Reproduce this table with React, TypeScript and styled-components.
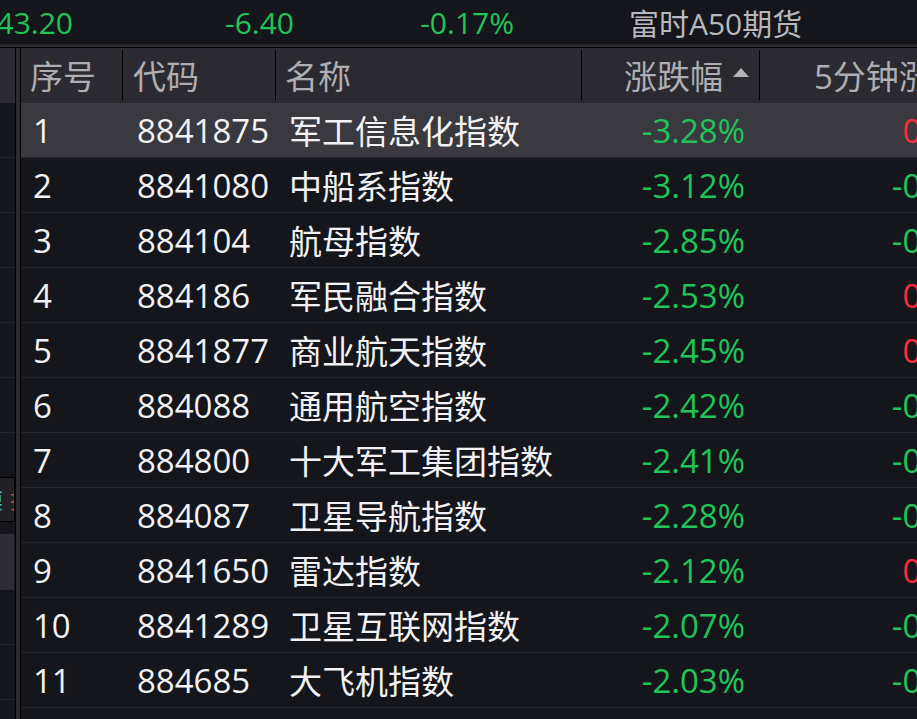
import React from "react";
import styled, { createGlobalStyle } from "styled-components";

const Global = createGlobalStyle`
  html, body { margin: 0; padding: 0; background: #14161b; }
  body { font-family: "Open Sans", "Noto Sans CJK SC", sans-serif; }
`;

const Page = styled.div`
  width: 917px;
  height: 719px;
  overflow: hidden;
  background: #14161b;
  display: flex;
  flex-direction: column;
  font-family: "Open Sans", "Noto Sans CJK SC", sans-serif;
`;

const TopBar = styled.div`
  height: 44px;
  flex: none;
  display: flex;
  align-items: center;
  font-size: 30px;
  border-bottom: 3px solid #2b2c31;
  white-space: nowrap;
`;

const Quote = styled.div<{ $w: number }>`
  width: ${(p) => p.$w}px;
  flex: none;
  display: flex;
  justify-content: flex-end;
  overflow: hidden;
  color: #1fc45a;
`;

const TopLabel = styled.div`
  margin-left: 115px;
  color: #b8b8bc;
`;

const Body = styled.div`
  flex: 1;
  display: flex;
  border-top: 1px solid #000;
  min-height: 0;
`;

const LeftStrip = styled.div`
  width: 15px;
  flex: none;
  display: flex;
  flex-direction: column;
  overflow: hidden;
`;

const StripHead = styled.div`
  height: 55px;
  flex: none;
  background: #2a2a30;
`;

const StripCell = styled.div`
  height: 54px;
  flex: none;
  border-bottom: 1px solid #24262b;
`;

const StripGap = styled.div<{ $h: number }>`
  height: ${(p) => p.$h}px;
  flex: none;
`;

const StripBox = styled.div`
  height: 43px;
  flex: none;
  background: #221f25;
  border: 1px solid #000;
  border-left: none;
  position: relative;
  overflow: hidden;
  font-size: 22px;
  line-height: 43px;
  white-space: nowrap;
`;

const StripChar = styled.span<{ $c: string; $x: number }>`
  position: absolute;
  top: 0;
  left: ${(p) => p.$x}px;
  color: ${(p) => p.$c};
`;

const StripLight = styled.div`
  height: 56px;
  flex: none;
  width: 14px;
  background: #2e2d33;
`;

const Divider = styled.div`
  width: 4px;
  flex: none;
  background: #2b2c31;
  border-left: 1px solid #000;
  border-right: 1px solid #000;
`;

const Table = styled.div`
  flex: 1;
  min-width: 0;
  overflow: hidden;
  display: flex;
  flex-direction: column;
`;

const HeadRow = styled.div`
  height: 55px;
  flex: none;
  display: flex;
  background: #2a2a30;
  color: #adadb2;
  font-size: 33px;
`;

const HeadCell = styled.div<{ $w: number; $right?: boolean; $pl?: number; $pr?: number; $last?: boolean }>`
  width: ${(p) => p.$w}px;
  flex: none;
  box-sizing: border-box;
  display: flex;
  align-items: center;
  justify-content: ${(p) => (p.$right ? "flex-end" : "flex-start")};
  padding-left: ${(p) => p.$pl ?? 0}px;
  padding-right: ${(p) => p.$pr ?? 0}px;
  margin: 2px 0 3px;
  border-right: ${(p) => (p.$last ? "none" : "1px solid #000")};
  white-space: nowrap;
  gap: 10px;
`;

const SortArrow = styled.span`
  width: 0;
  height: 0;
  border-left: 8px solid transparent;
  border-right: 8px solid transparent;
  border-bottom: 9px solid #b4b4b8;
  margin-top: -6px;
`;

const Row = styled.div<{ $active?: boolean }>`
  height: 54px;
  flex: none;
  display: flex;
  align-items: center;
  background: ${(p) => (p.$active ? "#3a393f" : "#14161b")};
  border-bottom: 1px solid #24262b;
  font-size: 33px;
  color: #f2f2f4;
  white-space: nowrap;
`;

const Cell = styled.div<{ $w: number; $right?: boolean; $pl?: number; $pr?: number; $color?: string }>`
  width: ${(p) => p.$w}px;
  flex: none;
  box-sizing: border-box;
  padding-left: ${(p) => p.$pl ?? 0}px;
  padding-right: ${(p) => p.$pr ?? 0}px;
  text-align: ${(p) => (p.$right ? "right" : "left")};
  color: ${(p) => p.$color ?? "inherit"};
`;

const GREEN = "#1fc45a";
const RED = "#ff2b3b";

const rows = [
  { code: "8841875", name: "军工信息化指数", chg: "-3.28%", m5: "0.12%" },
  { code: "8841080", name: "中船系指数", chg: "-3.12%", m5: "-0.05%" },
  { code: "884104", name: "航母指数", chg: "-2.85%", m5: "-0.03%" },
  { code: "884186", name: "军民融合指数", chg: "-2.53%", m5: "0.04%" },
  { code: "8841877", name: "商业航天指数", chg: "-2.45%", m5: "0.06%" },
  { code: "884088", name: "通用航空指数", chg: "-2.42%", m5: "-0.02%" },
  { code: "884800", name: "十大军工集团指数", chg: "-2.41%", m5: "-0.04%" },
  { code: "884087", name: "卫星导航指数", chg: "-2.28%", m5: "-0.01%" },
  { code: "8841650", name: "雷达指数", chg: "-2.12%", m5: "0.03%" },
  { code: "8841289", name: "卫星互联网指数", chg: "-2.07%", m5: "-0.02%" },
  { code: "884685", name: "大飞机指数", chg: "-2.03%", m5: "-0.06%" },
  { code: "884105", name: "无人机指数", chg: "-1.98%", m5: "-0.03%" },
];

const W = [102, 153, 306, 178, 260];

export default function App() {
  return (
    <Page>
      <Global />
      <TopBar>
        <Quote $w={73}>43.20</Quote>
        <Quote $w={221}>-6.40</Quote>
        <Quote $w={220}>-0.17%</Quote>
        <TopLabel>富时A50期货</TopLabel>
      </TopBar>
      <Body>
        <LeftStrip>
          <StripHead />
          <StripCell />
          <StripCell />
          <StripCell />
          <StripCell />
          <StripCell />
          <StripCell />
          <StripGap $h={44} />
          <StripBox>
            <StripChar $c="#3fc6d6" $x={-19}>模</StripChar>
            <StripChar $c="#c8465a" $x={10}>拟</StripChar>
          </StripBox>
          <StripGap $h={12} />
          <StripLight />
          <StripCell />
          <StripCell />
        </LeftStrip>
        <Divider />
        <Table>
          <HeadRow>
            <HeadCell $w={W[0]} $pl={9}>序号</HeadCell>
            <HeadCell $w={W[1]} $pl={10}>代码</HeadCell>
            <HeadCell $w={W[2]} $pl={9}>名称</HeadCell>
            <HeadCell $w={W[3]} $right $pr={10}>
              涨跌幅
              <SortArrow />
            </HeadCell>
            <HeadCell $w={W[4]} $pl={54} $last>5分钟涨速</HeadCell>
          </HeadRow>
          {rows.map((r, i) => (
            <Row key={r.code} $active={i === 0}>
              <Cell $w={W[0]} $pl={12}>{i + 1}</Cell>
              <Cell $w={W[1]} $pl={14}>{r.code}</Cell>
              <Cell $w={W[2]} $pl={13}>{r.name}</Cell>
              <Cell $w={W[3]} $right $pr={15} $color={GREEN}>{r.chg}</Cell>
              <Cell $w={W[4]} $right $pr={25} $color={r.m5.startsWith("-") ? GREEN : RED}>{r.m5}</Cell>
            </Row>
          ))}
        </Table>
      </Body>
    </Page>
  );
}
